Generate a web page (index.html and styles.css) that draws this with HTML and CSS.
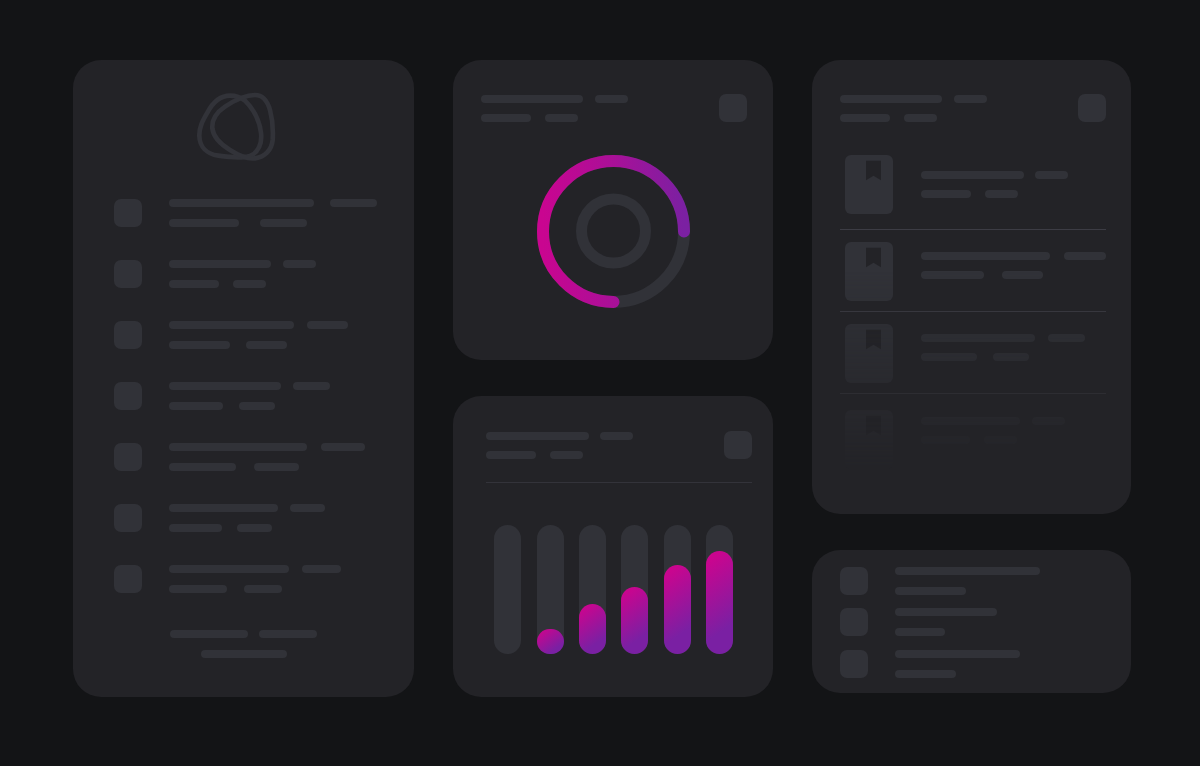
FILE: index.html
```html
<!DOCTYPE html>
<html lang="en">
<head>
<meta charset="utf-8">
<title>Dashboard skeleton</title>
<link rel="stylesheet" href="styles.css">
</head>
<body>
<main class="board">
  <section class="card nav-card">
    <svg class="logo" viewBox="0 0 330 270" aria-hidden="true">
      <path d="M150 47C120 47 98 68 82 98C68 122 57 142 58 168C59 200 80 222 115 227C150 232 185 236 210 228C235 218 247 190 243 158C238 120 218 85 195 62C180 50 168 47 150 47Z"/>
      <path d="M225 45C195 45 165 60 135 80C110 97 95 120 97 145C100 172 125 195 150 210C175 226 200 238 225 235C255 231 275 210 278 180C280 150 278 120 270 90C262 62 250 45 225 45Z"/>
    </svg>
    <div class="nav-list">
      <div class="nav-row"><span class="tile"></span><div class="lines"><div class="line"><i style="width:145px"></i><i style="width:47px;margin-left:16px"></i></div><div class="line"><i style="width:70px"></i><i style="width:47px;margin-left:21px"></i></div></div></div>
      <div class="nav-row"><span class="tile"></span><div class="lines"><div class="line"><i style="width:102px"></i><i style="width:33px;margin-left:12px"></i></div><div class="line"><i style="width:50px"></i><i style="width:33px;margin-left:14px"></i></div></div></div>
      <div class="nav-row"><span class="tile"></span><div class="lines"><div class="line"><i style="width:125px"></i><i style="width:41px;margin-left:13px"></i></div><div class="line"><i style="width:61px"></i><i style="width:41px;margin-left:16px"></i></div></div></div>
      <div class="nav-row"><span class="tile"></span><div class="lines"><div class="line"><i style="width:112px"></i><i style="width:37px;margin-left:12px"></i></div><div class="line"><i style="width:54px"></i><i style="width:36px;margin-left:16px"></i></div></div></div>
      <div class="nav-row"><span class="tile"></span><div class="lines"><div class="line"><i style="width:138px"></i><i style="width:44px;margin-left:14px"></i></div><div class="line"><i style="width:67px"></i><i style="width:45px;margin-left:18px"></i></div></div></div>
      <div class="nav-row"><span class="tile"></span><div class="lines"><div class="line"><i style="width:109px"></i><i style="width:35px;margin-left:12px"></i></div><div class="line"><i style="width:53px"></i><i style="width:35px;margin-left:15px"></i></div></div></div>
      <div class="nav-row"><span class="tile"></span><div class="lines"><div class="line"><i style="width:120px"></i><i style="width:39px;margin-left:13px"></i></div><div class="line"><i style="width:58px"></i><i style="width:38px;margin-left:17px"></i></div></div></div>
    </div>
    <div class="nav-foot">
      <div class="line"><i style="width:78px"></i><i style="width:58px;margin-left:11px"></i></div>
      <div class="line"><i style="width:86px"></i></div>
    </div>
  </section>

  <div class="column">
    <section class="card donut-card">
      <header class="head">
        <div class="lines"><div class="line"><i style="width:102px"></i><i style="width:33px;margin-left:12px"></i></div><div class="line"><i style="width:50px"></i><i style="width:33px;margin-left:14px"></i></div></div>
        <span class="tile"></span>
      </header>
      <svg class="donut" viewBox="0 0 160 160" aria-hidden="true">
        <defs>
          <linearGradient id="arc" x1="0" y1="0.5" x2="1" y2="0.5">
            <stop offset="0" stop-color="#c90590"/>
            <stop offset="0.5" stop-color="#a91098"/>
            <stop offset="1" stop-color="#7b20a2"/>
          </linearGradient>
        </defs>
        <circle class="donut-track" cx="80.5" cy="79.5" r="70.5"/>
        <circle class="donut-core" cx="80.5" cy="79" r="32"/>
        <path class="donut-arc" d="M151 79.5A70.5 70.5 0 1 0 80.5 150"/>
      </svg>
    </section>
    <section class="card bars-card">
      <header class="head">
        <div class="lines"><div class="line"><i style="width:103px"></i><i style="width:33px;margin-left:11px"></i></div><div class="line"><i style="width:50px"></i><i style="width:33px;margin-left:14px"></i></div></div>
        <span class="tile"></span>
      </header>
      <hr class="rule">
      <div class="bars">
        <div class="bar"></div>
        <div class="bar"><b style="height:25px"></b></div>
        <div class="bar"><b style="height:50px"></b></div>
        <div class="bar"><b style="height:67px"></b></div>
        <div class="bar"><b style="height:89px"></b></div>
        <div class="bar"><b style="height:103px"></b></div>
      </div>
    </section>
  </div>

  <div class="column column-narrow">
    <section class="card books-card">
      <header class="head">
        <div class="lines"><div class="line"><i style="width:102px"></i><i style="width:33px;margin-left:12px"></i></div><div class="line"><i style="width:50px"></i><i style="width:33px;margin-left:14px"></i></div></div>
        <span class="tile"></span>
      </header>
      <div class="books">
        <div class="book-row row-a">
          <div class="book"><svg viewBox="0 0 16 21" aria-hidden="true"><path d="M0 0H16V21L8 16L0 21Z"/></svg></div>
          <div class="lines"><div class="line"><i style="width:103px"></i><i style="width:33px;margin-left:11px"></i></div><div class="line"><i style="width:50px"></i><i style="width:33px;margin-left:14px"></i></div></div>
        </div>
        <div class="book-row row-b">
          <div class="book"><svg viewBox="0 0 16 21" aria-hidden="true"><path d="M0 0H16V21L8 16L0 21Z"/></svg></div>
          <div class="lines"><div class="line"><i style="width:129px"></i><i style="width:42px;margin-left:14px"></i></div><div class="line"><i style="width:63px"></i><i style="width:41px;margin-left:18px"></i></div></div>
        </div>
        <div class="book-row row-c">
          <div class="book"><svg viewBox="0 0 16 21" aria-hidden="true"><path d="M0 0H16V21L8 16L0 21Z"/></svg></div>
          <div class="lines"><div class="line"><i style="width:114px"></i><i style="width:37px;margin-left:13px"></i></div><div class="line"><i style="width:56px"></i><i style="width:36px;margin-left:16px"></i></div></div>
        </div>
        <div class="book-row row-d">
          <div class="book"><svg viewBox="0 0 16 21" aria-hidden="true"><path d="M0 0H16V21L8 16L0 21Z"/></svg></div>
          <div class="lines"><div class="line"><i style="width:99px"></i><i style="width:33px;margin-left:12px"></i></div><div class="line"><i style="width:49px"></i><i style="width:33px;margin-left:14px"></i></div></div>
        </div>
      </div>
    </section>
    <section class="card mini-card">
      <div class="mini-row"><span class="tile"></span><div class="lines"><div class="line"><i style="width:145px"></i></div><div class="line"><i style="width:71px"></i></div></div></div>
      <div class="mini-row"><span class="tile"></span><div class="lines"><div class="line"><i style="width:102px"></i></div><div class="line"><i style="width:50px"></i></div></div></div>
      <div class="mini-row"><span class="tile"></span><div class="lines"><div class="line"><i style="width:125px"></i></div><div class="line"><i style="width:61px"></i></div></div></div>
    </section>
  </div>
</main>
</body>
</html>
```
FILE: styles.css
```css
* { box-sizing: border-box; }
html, body { margin: 0; height: 100%; }
body { background: #131416; overflow: hidden; }

.board {
  display: flex;
  align-items: flex-start;
  gap: 39px;
  padding: 60px 0 0 73px;
}
.column { display: flex; flex-direction: column; gap: 36px; width: 320px; }
.column-narrow { width: 319px; }
.card { background: #232327; border-radius: 28px; }

.line { display: flex; height: 8px; }
.line i { display: block; height: 8px; border-radius: 4px; background: #313238; }
.lines { display: flex; flex-direction: column; gap: 11px; }
.tile { display: block; flex: none; width: 28px; height: 28px; border-radius: 7px; background: #313238; }

/* Navigation card */
.nav-card { width: 341px; height: 637px; padding: 20px 0 0 0; }
.logo { display: block; width: 110px; height: 90px; margin-left: 107px; }
.logo path { fill: none; stroke: #323339; stroke-width: 14; }
.nav-list { display: flex; flex-direction: column; gap: 33px; margin-top: 29px; padding-left: 41px; }
.nav-row { display: flex; gap: 27px; }
.nav-row .lines { gap: 12px; }
.nav-foot { display: flex; flex-direction: column; align-items: center; gap: 12px; margin-top: 37px; }

/* Shared header */
.head { display: flex; justify-content: space-between; align-items: flex-start; }
.head .lines { margin-top: 1px; }

/* Donut card */
.donut-card { height: 300px; padding: 34px 26px 0 28px; }
.donut { display: block; width: 160px; height: 160px; margin: 30px 0 0 52px; }
.donut circle, .donut-arc { fill: none; }
.donut-track { stroke: #313238; stroke-width: 12; }
.donut-core { stroke: #313238; stroke-width: 11; }
.donut-arc { stroke: url(#arc); stroke-width: 12; stroke-linecap: round; }

/* Bars card */
.bars-card { height: 301px; padding: 35px 21px 0 33px; }
.rule { height: 1px; margin: 23px 0 0; border: 0; background: #33333a; }
.bars { display: flex; justify-content: space-between; margin: 42px 19px 0 8.3px; }
.bar {
  display: flex;
  align-items: flex-end;
  width: 27px;
  height: 129px;
  border-radius: 14px;
  background: #313238;
}
.bar b {
  display: block;
  width: 100%;
  border-radius: 14px;
  background: linear-gradient(145deg, #c9058f 10%, #7a20a3 75%);
}

/* Books card */
.books-card { height: 454px; padding: 34px 25px 0 28px; }
.books {
  margin-top: 33px;
  -webkit-mask-image: linear-gradient(#000 115px, rgba(0,0,0,.02) 315px);
  mask-image: linear-gradient(#000 115px, rgba(0,0,0,.02) 315px);
}
.book-row { display: flex; align-items: flex-start; gap: 28px; padding-left: 5px; border-bottom: 1px solid #3c3c44; }
.book {
  flex: none;
  width: 48px;
  height: 59px;
  padding-left: 21px;
  border-radius: 6px;
  background: #313238;
}
.book svg { display: block; width: 15px; height: 21px; margin-top: 5px; }
.book path { fill: #232327; }
.row-a { padding-bottom: 15px; }
.row-a .lines { margin-top: 16px; }
.row-b { margin-top: 12px; padding-bottom: 10px; }
.row-b .lines { margin-top: 10px; }
.row-c { margin-top: 12px; padding-bottom: 10px; }
.row-c .lines { margin-top: 10px; }
.row-d { margin-top: 16px; border-bottom: 0; }
.row-d .lines { margin-top: 7px; }

/* Mini list card */
.mini-card { display: flex; flex-direction: column; gap: 13px; height: 143px; padding: 17px 0 0 28px; }
.mini-row { display: flex; gap: 27px; }
.mini-row:last-child { margin-top: 1px; }
.mini-row .lines { gap: 12px; }
```
